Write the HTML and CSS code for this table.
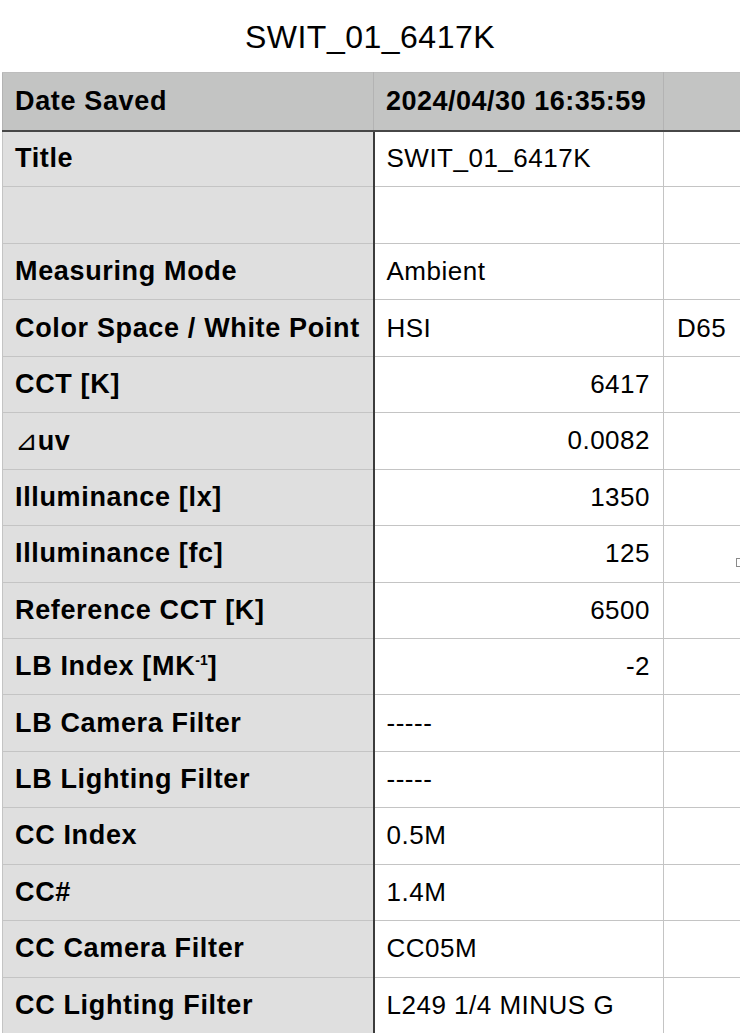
FILE: index.html
```html
<!DOCTYPE html>
<html lang="en">
<head>
<meta charset="utf-8">
<title>SWIT_01_6417K</title>
<link rel="stylesheet" href="styles.css">
</head>
<body>
<div class="page">
  <h1 class="doc-title">SWIT_01_6417K</h1>
  <div class="sheet">
    <table class="grid">
      <colgroup>
        <col class="c-label">
        <col class="c-value">
        <col class="c-extra">
      </colgroup>
      <thead>
        <tr class="head-row">
          <th class="label">Date Saved</th>
          <th class="value">2024/04/30 16:35:59</th>
          <th class="extra"></th>
        </tr>
      </thead>
      <tbody>
        <tr><th class="label">Title</th><td class="value">SWIT_01_6417K</td><td class="extra"></td></tr>
        <tr><th class="label"></th><td class="value"></td><td class="extra"></td></tr>
        <tr><th class="label">Measuring Mode</th><td class="value">Ambient</td><td class="extra"></td></tr>
        <tr><th class="label">Color Space / White Point</th><td class="value">HSI</td><td class="extra">D65</td></tr>
        <tr><th class="label">CCT [K]</th><td class="value num">6417</td><td class="extra"></td></tr>
        <tr><th class="label"><span class="tri">⊿</span>uv</th><td class="value num">0.0082</td><td class="extra"></td></tr>
        <tr><th class="label">Illuminance [lx]</th><td class="value num">1350</td><td class="extra"></td></tr>
        <tr><th class="label">Illuminance [fc]</th><td class="value num">125</td><td class="extra"><span class="handle"></span></td></tr>
        <tr><th class="label">Reference CCT [K]</th><td class="value num">6500</td><td class="extra"></td></tr>
        <tr><th class="label">LB Index [MK<span class="sup">-1</span>]</th><td class="value num">-2</td><td class="extra"></td></tr>
        <tr><th class="label">LB Camera Filter</th><td class="value">-----</td><td class="extra"></td></tr>
        <tr><th class="label">LB Lighting Filter</th><td class="value">-----</td><td class="extra"></td></tr>
        <tr><th class="label">CC Index</th><td class="value">0.5M</td><td class="extra"></td></tr>
        <tr><th class="label">CC#</th><td class="value">1.4M</td><td class="extra"></td></tr>
        <tr><th class="label">CC Camera Filter</th><td class="value">CC05M</td><td class="extra"></td></tr>
        <tr><th class="label">CC Lighting Filter</th><td class="value">L249 1/4 MINUS G</td><td class="extra"></td></tr>
      </tbody>
    </table>
  </div>
</div>
</body>
</html>
```

FILE: styles.css
```css
html, body {
  margin: 0;
  padding: 0;
  background: #ffffff;
}

body {
  font-family: "Liberation Sans", Arial, Helvetica, sans-serif;
  color: #000;
  overflow: hidden;
}

.page {
  width: 740px;
  overflow: hidden;
}

.doc-title {
  margin: 0;
  height: 72px;
  line-height: 74px;
  text-align: center;
  font-size: 32px;
  font-weight: normal;
  letter-spacing: 0.5px;
  color: #000;
}

.sheet {
  padding-left: 2px;
  width: 800px;
}

.grid {
  border-collapse: collapse;
  table-layout: fixed;
  width: 761px;
}

.c-label { width: 371px; }
.c-value { width: 290px; }
.c-extra { width: 100px; }

.grid th,
.grid td {
  padding: 0;
  vertical-align: middle;
  white-space: nowrap;
  border: 1px solid #c4c4c4;
}

.grid tbody tr {
  height: 56.44px;
}

.grid .head-row {
  height: 58px;
}

.grid .head-row th {
  background: #c3c4c3;
  border-top: 1px solid #bdbdbd;
  border-bottom: 2px solid #474747;
  border-left-color: #b3b3b3;
  border-right-color: #b3b3b3;
}

.grid .label {
  text-align: left;
  padding-left: 12px;
  font-weight: bold;
  font-size: 27px;
  letter-spacing: 0.65px;
  background: #dfdfdf;
}

.grid tbody .label {
  border-right: 2px solid #3c3c3c;
}

.grid .head-row .value {
  text-align: left;
  padding-left: 12px;
  font-weight: bold;
  font-size: 27px;
  letter-spacing: 0.5px;
}

.grid td.value {
  background: #fff;
  font-size: 26px;
  letter-spacing: 0.5px;
  padding-left: 12px;
  padding-right: 13px;
  text-align: left;
}

.grid td.num {
  text-align: right;
}

.grid .extra {
  font-size: 26px;
  letter-spacing: 0.5px;
  padding-left: 13px;
  text-align: left;
  position: relative;
}

.grid td.extra {
  background: #fff;
}

.tri {
  font-family: "DejaVu Sans", "Noto Sans CJK JP", sans-serif;
  font-weight: normal;
  font-size: 27px;
  letter-spacing: 0;
}

.sup {
  font-size: 14px;
  vertical-align: 10px;
  letter-spacing: 0;
}

.handle {
  position: absolute;
  left: 72px;
  top: 32px;
  width: 6px;
  height: 7px;
  border: 1px solid #8a8a8a;
  border-right: none;
  background: #fff;
}
```
